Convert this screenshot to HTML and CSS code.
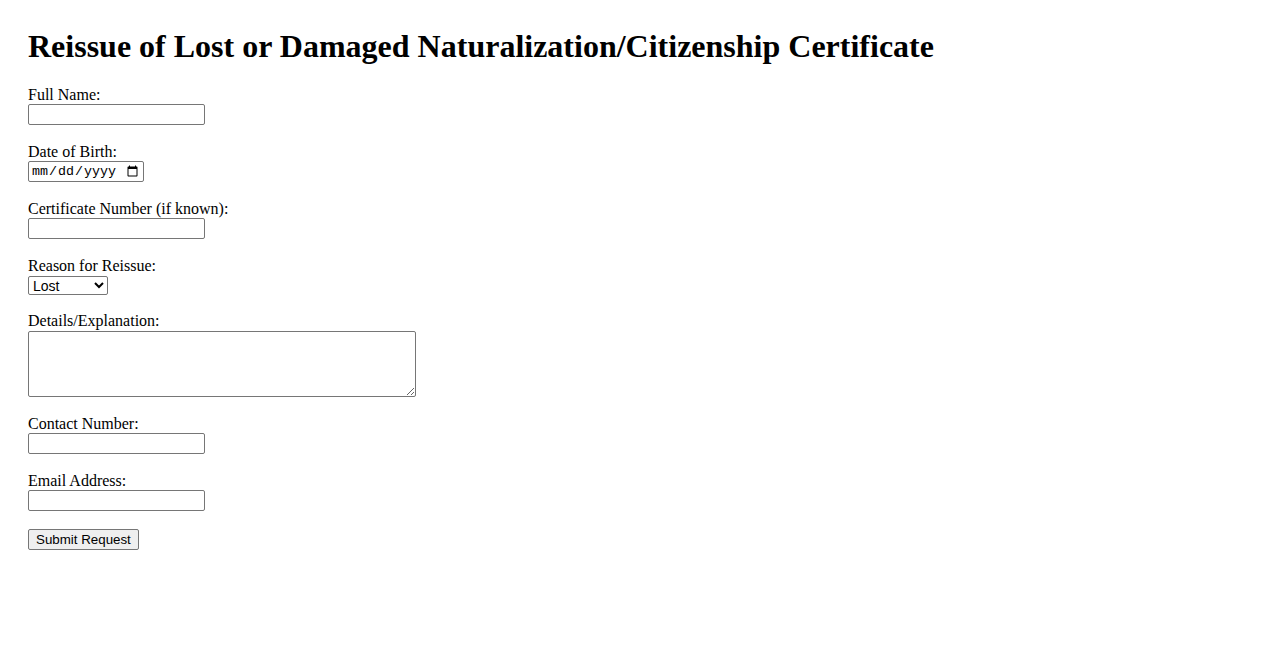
FILE: index.html
```html
<!DOCTYPE html>
<html lang="en">
<head>
<meta charset="utf-8">
<title>Reissue of Lost or Damaged Naturalization/Citizenship Certificate</title>
<link rel="stylesheet" href="styles.css">
</head>
<body>
<h1 class="title">Reissue of Lost or Damaged Naturalization/Citizenship Certificate</h1>
<form class="form">
  <div class="field">
    <label class="label" for="name">Full Name:</label>
    <input class="text" id="name" type="text">
  </div>
  <div class="field">
    <label class="label" for="dob">Date of Birth:</label>
    <input class="date" id="dob" type="date">
  </div>
  <div class="field">
    <label class="label" for="cert">Certificate Number (if known):</label>
    <input class="text" id="cert" type="text">
  </div>
  <div class="field">
    <label class="label" for="reason">Reason for Reissue:</label>
    <select class="select" id="reason">
      <option>Lost</option>
      <option>Damaged</option>
    </select>
  </div>
  <div class="field">
    <label class="label" for="details">Details/Explanation:</label>
    <textarea class="area" id="details" rows="4"></textarea>
  </div>
  <div class="field">
    <label class="label" for="phone">Contact Number:</label>
    <input class="text" id="phone" type="tel">
  </div>
  <div class="field">
    <label class="label" for="email">Email Address:</label>
    <input class="text" id="email" type="email">
  </div>
  <button class="submit" type="submit">Submit Request</button>
</form>
</body>
</html>
```
FILE: styles.css
```css
html, body {
  background: #fff;
}
body {
  margin: 0;
  padding: 28px;
  font-family: "Liberation Serif", "Times New Roman", serif;
  font-size: 16px;
  color: #000;
}
.title {
  margin: 0 0 20.5px;
  font-size: 32px;
  font-weight: bold;
}
.form {
  display: flex;
  flex-direction: column;
  align-items: flex-start;
}
.field {
  display: flex;
  flex-direction: column;
  align-items: flex-start;
  margin-bottom: 17.8px;
}
.label {
  display: block;
  line-height: 18.4px;
}
.text, .date, .select, .area, .submit {
  font-family: "Liberation Sans", Arial, sans-serif;
  font-size: 13.33px;
  color: #000;
}
.text {
  box-sizing: border-box;
  width: 177px;
  height: 21px;
  margin: 0;
  padding: 1px 2px;
  border: 1px solid #767676;
  border-radius: 2px;
  background: #fff;
}
.date {
  box-sizing: border-box;
  width: 116px;
  height: 21px;
  margin: 0;
  padding: 0 2px;
  border: 1px solid #767676;
  border-radius: 2px;
  background: #fff;
  font-family: "Liberation Mono", "DejaVu Sans Mono", monospace;
  font-size: 13.33px;
}
.select {
  box-sizing: border-box;
  width: 80px;
  height: 19px;
  margin: 0;
  border: 1px solid #767676;
  border-radius: 2px;
  background: #fff;
  font-size: 14px;
}
.area {
  box-sizing: border-box;
  width: 388px;
  height: 66px;
  margin: 0;
  padding: 2px;
  border: 1px solid #767676;
  border-radius: 2px;
  font-family: "Liberation Mono", monospace;
}
.submit {
  box-sizing: border-box;
  height: 21px;
  margin: 0;
  padding: 1px 7px;
  white-space: nowrap;
  border: 1px solid #767676;
  border-radius: 2px;
  background: #efefef;
  font-size: 13.33px;
}
```
